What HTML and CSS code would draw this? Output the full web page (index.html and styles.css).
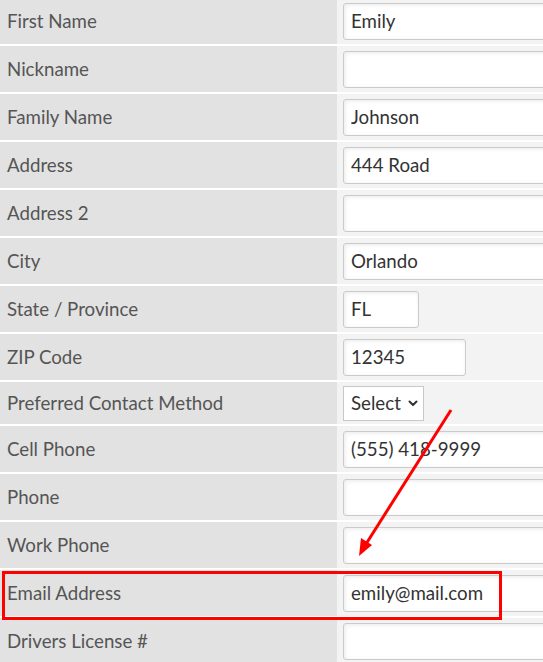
FILE: index.html
```html
<!DOCTYPE html>
<html lang="en">
<head>
    <meta charset="UTF-8">
    <title>Contact Details</title>
    <link rel="stylesheet" href="styles.css">
</head>
<body>
    <div class="page">
        <form class="form-table">
            <div class="row">
                <label class="label">First Name</label>
                <div class="field"><input class="input full" type="text" value="Emily"></div>
            </div>
            <div class="row">
                <label class="label">Nickname</label>
                <div class="field"><input class="input full" type="text" value=""></div>
            </div>
            <div class="row">
                <label class="label">Family Name</label>
                <div class="field"><input class="input full" type="text" value="Johnson"></div>
            </div>
            <div class="row">
                <label class="label">Address</label>
                <div class="field"><input class="input full" type="text" value="444 Road"></div>
            </div>
            <div class="row">
                <label class="label">Address 2</label>
                <div class="field"><input class="input full" type="text" value=""></div>
            </div>
            <div class="row">
                <label class="label">City</label>
                <div class="field"><input class="input full" type="text" value="Orlando"></div>
            </div>
            <div class="row">
                <label class="label">State / Province</label>
                <div class="field"><input class="input state" type="text" value="FL"></div>
            </div>
            <div class="row">
                <label class="label">ZIP Code</label>
                <div class="field"><input class="input zip" type="text" value="12345"></div>
            </div>
            <div class="row short">
                <label class="label">Preferred Contact Method</label>
                <div class="field">
                    <div class="select-wrap">
                        <select class="select">
                            <option>Select</option>
                            <option>Email</option>
                            <option>Phone</option>
                        </select>
                        <svg class="chevron" width="10" height="7" viewBox="0 0 10 7">
                            <path d="M1.5 1.5 L5 5 L8.5 1.5" fill="none" stroke="#333" stroke-width="2" stroke-linecap="round" stroke-linejoin="round"/>
                        </svg>
                    </div>
                </div>
            </div>
            <div class="row">
                <label class="label">Cell Phone</label>
                <div class="field"><input class="input full" type="text" value="(555) 418-9999"></div>
            </div>
            <div class="row">
                <label class="label">Phone</label>
                <div class="field"><input class="input full" type="text" value=""></div>
            </div>
            <div class="row">
                <label class="label">Work Phone</label>
                <div class="field"><input class="input full" type="text" value=""></div>
            </div>
            <div class="row">
                <label class="label">Email Address</label>
                <div class="field"><input class="input full" type="text" value="emily@mail.com"></div>
            </div>
            <div class="row">
                <label class="label">Drivers License #</label>
                <div class="field"><input class="input full" type="text" value=""></div>
            </div>
        </form>

        <!-- annotation drawn over the form -->
        <svg class="annotation" width="543" height="662" viewBox="0 0 543 662">
            <rect x="3.5" y="572.5" width="497" height="46" fill="none" stroke="#f00" stroke-width="3"/>
            <line x1="451" y1="410" x2="366" y2="544" stroke="#f00" stroke-width="3"/>
            <polygon points="359,556 361,538 372,545" fill="#f00"/>
        </svg>
    </div>
</body>
</html>
```

FILE: styles.css
```css
html, body {
    margin: 0;
    padding: 0;
    overflow: hidden;
    background: #fff;
}
body {
    font-family: 'Lato', 'Open Sans', sans-serif;
}
.page {
    position: relative;
    width: 543px;
    height: 662px;
    overflow: hidden;
}
.form-table {
    display: flex;
    flex-direction: column;
    gap: 2px;
    margin-top: -2px;
}
.row {
    display: flex;
    height: 46px;
}
.row.short {
    height: 42px;
}
.label {
    width: 337px;
    flex-shrink: 0;
    display: flex;
    align-items: center;
    padding-left: 7px;
    box-sizing: border-box;
    background-color: #e2e2e2;
    color: #555;
    font-size: 18.7px;
}
.field {
    flex: 1;
    display: flex;
    align-items: center;
    padding-left: 6px;
    background-color: #f3f3f3;
}
.input {
    height: 37px;
    box-sizing: border-box;
    border: 1px solid #cbcbcb;
    border-radius: 3px;
    padding: 0 7px;
    background: #fff;
    box-shadow: inset 1px 1px 4px rgba(0, 0, 0, 0.09);
    font-family: 'Lato', 'Open Sans', sans-serif;
    font-size: 18.7px;
    color: #333;
    outline: none;
    flex-shrink: 0;
}
.input.full {
    width: 240px;
}
.input.state {
    width: 76px;
}
.input.zip {
    width: 123px;
}
.select-wrap {
    position: relative;
    width: 81px;
    height: 35px;
}
.select {
    appearance: none;
    -webkit-appearance: none;
    width: 100%;
    height: 100%;
    box-sizing: border-box;
    border: 1px solid #c8c8c8;
    border-radius: 0;
    background: #fff;
    padding: 0 0 0 7px;
    font-family: 'Lato', 'Open Sans', sans-serif;
    font-size: 18.7px;
    color: #333;
    outline: none;
}
.chevron {
    position: absolute;
    right: 6px;
    top: 14px;
    pointer-events: none;
}
.annotation {
    position: absolute;
    left: 0;
    top: 0;
    pointer-events: none;
}
```
